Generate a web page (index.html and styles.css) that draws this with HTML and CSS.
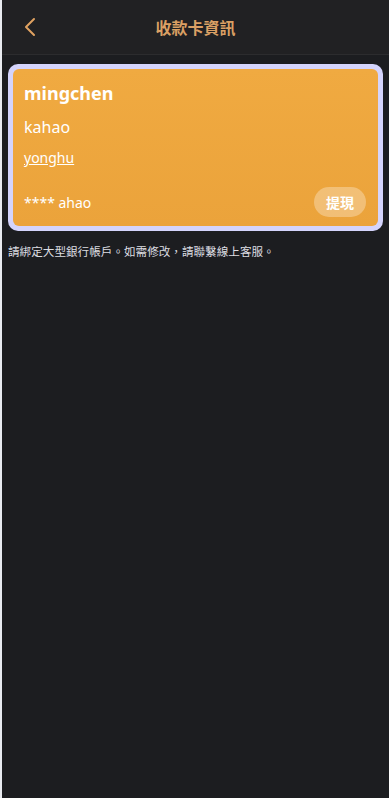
FILE: index.html
```html
<!DOCTYPE html>
<html lang="zh-Hant">
<head>
  <meta charset="UTF-8" />
  <meta name="viewport" content="width=device-width, initial-scale=1.0"/>
  <title>收款卡資訊</title>
  <link rel="stylesheet" href="styles.css">
</head>
<body>
  <div class="page">
    <header class="topbar">
      <a class="back" href="#">
        <svg width="14" height="20" viewBox="0 0 14 20">
          <path d="M11 2 L3 10 L11 18" fill="none" stroke="#e0a261" stroke-width="2" stroke-linecap="round" stroke-linejoin="round"/>
        </svg>
      </a>
      <h1 class="title">收款卡資訊</h1>
    </header>

    <main class="content">
      <div class="card-frame">
        <div class="card">
          <div class="card-name">mingchen</div>
          <div class="card-bank">kahao</div>
          <a class="card-user" href="#">yonghu</a>
          <div class="card-bottom">
            <span class="card-no">**** ahao</span>
            <button class="withdraw">提現</button>
          </div>
        </div>
      </div>
      <p class="note">請綁定大型銀行帳戶。如需修改，請聯繫線上客服。</p>
    </main>
  </div>
</body>
</html>
```

FILE: styles.css
```css
html, body {
  margin: 0;
  padding: 0;
  height: 100%;
}
body {
  background-color: #e9ebf0;
  font-family: "Noto Sans", "Noto Sans CJK TC", sans-serif;
}
.page {
  margin-left: 2px;
  min-height: 100%;
  background-color: #1c1d20;
}
.topbar {
  height: 54px;
  display: flex;
  align-items: center;
  justify-content: center;
  position: relative;
  background-color: #212123;
  border-bottom: 1px solid #2c2c2e;
}
.back {
  position: absolute;
  left: 21px;
  top: 17px;
  display: flex;
}
.title {
  margin: 0;
  font-size: 16px;
  font-weight: bold;
  color: #dba064;
}
.content {
  padding: 9px 6px;
}
.card-frame {
  background-color: #d4d4fc;
  padding: 5px;
  border-radius: 10px;
}
.card {
  background: linear-gradient(#f0aa41, #eba33b);
  border-radius: 6px;
  padding: 9px 12px 9px 11px;
  color: #fff;
  display: flex;
  flex-direction: column;
  align-items: flex-start;
}
.card-name {
  font-size: 18px;
  font-weight: bold;
  line-height: 30px;
}
.card-bank {
  font-size: 16px;
  line-height: 22px;
  margin-top: 8px;
}
.card-user {
  color: #fff;
  font-size: 14px;
  line-height: 20px;
  margin-top: 10px;
}
.card-bottom {
  align-self: stretch;
  display: flex;
  justify-content: space-between;
  align-items: center;
  margin-top: 19px;
}
.card-no {
  font-size: 14px;
}
.withdraw {
  border: none;
  background-color: rgba(255, 255, 255, 0.3);
  color: #fff;
  font-family: inherit;
  font-size: 14px;
  font-weight: bold;
  border-radius: 15px;
  height: 30px;
  padding: 0 12px;
}
.note {
  margin: 12px 0 0;
  font-size: 11.6px;
  color: #dcdde2;
}
```
